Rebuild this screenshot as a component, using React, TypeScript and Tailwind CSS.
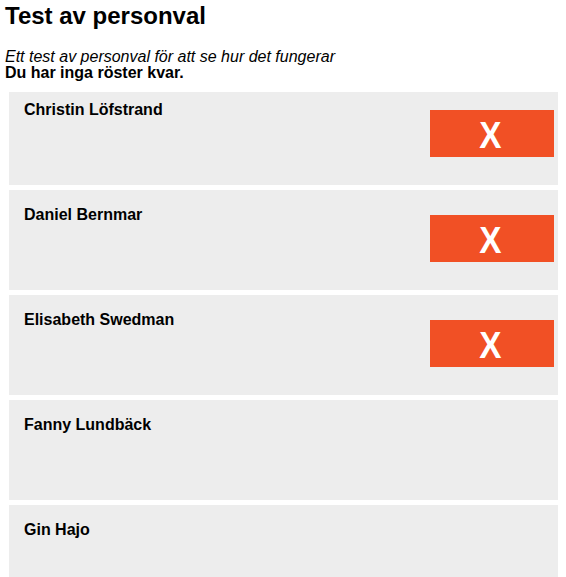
const candidates = [
  { name: "Christin Löfstrand", voted: true },
  { name: "Daniel Bernmar", voted: true },
  { name: "Elisabeth Swedman", voted: true },
  { name: "Fanny Lundbäck", voted: false },
  { name: "Gin Hajo", voted: false },
];

export default function App() {
  return (
    <div className="min-h-screen bg-white text-black font-['Liberation_Sans',Arial,sans-serif] px-[5px] pt-[2px]">
      <h1 className="text-[24px] leading-[28px] font-bold">Test av personval</h1>
      <p className="mt-[19px] text-[16px] leading-[16px] italic">
        Ett test av personval för att se hur det fungerar
      </p>
      <p className="text-[16px] leading-[16px] font-bold">Du har inga röster kvar.</p>

      {/* candidate list */}
      <div className="mt-[11px] ml-[4px] mr-[3px] flex flex-col gap-[5px]">
        {candidates.map((c, i) => (
          <div
            key={c.name}
            className={`flex justify-between bg-[#ededed] pl-[15px] pr-[4px] ${
              i === 0 ? "h-[93px] pt-[9px]" : "h-[100px] pt-[16px]"
            }`}
          >
            <span className="text-[16px] leading-[18px] font-bold">{c.name}</span>
            {c.voted && (
              <button className="mt-[9px] w-[124px] h-[47px] pt-[3px] bg-[#f15025] flex items-center justify-center">
                <span className="-ml-[3px] text-white font-bold text-[37px] leading-none scale-x-[0.9] inline-block">
                  X
                </span>
              </button>
            )}
          </div>
        ))}
      </div>
    </div>
  );
}
